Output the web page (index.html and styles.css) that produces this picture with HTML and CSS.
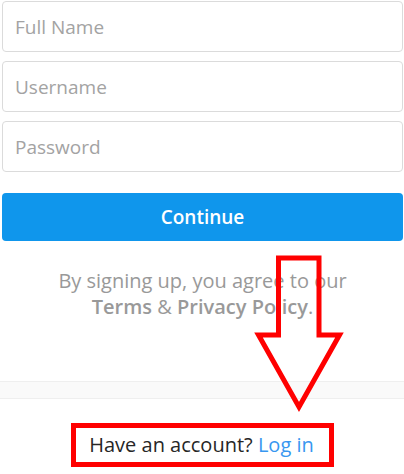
FILE: index.html
```html
<!DOCTYPE html>
<html>
<head>
<meta charset="utf-8">
<link rel="stylesheet" href="styles.css">
</head>
<body>
<div class="page">
  <form class="form">
    <input class="field" type="text" placeholder="Full Name">
    <input class="field" type="text" placeholder="Username">
    <input class="field field-last" type="password" placeholder="Password">
    <button class="btn" type="button">Continue</button>
  </form>
  <p class="terms">By signing up, you agree to our<br><b>Terms</b> &amp; <b>Privacy Policy</b>.</p>
  <div class="band"></div>
  <p class="login"><span class="highlight">Have an account? <a class="link">Log in</a></span></p>
  <svg class="arrow" viewBox="0 0 404 474" width="404" height="474">
    <polygon points="278.5,258 319,258 319,335 339.5,335 299,407 258.5,335 278.5,335" fill="none" stroke="#ff0000" stroke-width="5" stroke-linejoin="miter" stroke-miterlimit="10"/>
  </svg>
</div>
</body>
</html>
```
FILE: styles.css
```css
html, body {
  margin: 0;
  padding: 0;
  background: #ffffff;
}
body {
  font-family: "Open Sans", Lato, "Liberation Sans", sans-serif;
  width: 404px;
  height: 474px;
  overflow: hidden;
}
.page {
  position: relative;
  padding: 1px 1px 0 2px;
  height: 474px;
  box-sizing: border-box;
}
.form {
  margin: 0;
  display: flex;
  flex-direction: column;
  gap: 9px;
}
.field {
  display: block;
  width: 100%;
  height: 51px;
  box-sizing: border-box;
  border: 1px solid #dbdbdb;
  border-radius: 4px;
  padding: 0 12px;
  font-family: inherit;
  font-size: 19px;
  color: #262626;
  background: #ffffff;
  outline: none;
}
.field::placeholder {
  color: #a3a3a3;
}
.field-last {
  margin-bottom: 12px;
}
.btn {
  display: block;
  width: 100%;
  height: 48px;
  border: none;
  border-radius: 4px;
  background: #0f96ec;
  color: #ffffff;
  font-family: inherit;
  font-weight: 600;
  font-size: 19px;
  cursor: pointer;
}
.terms {
  margin: 27px 0 0;
  text-align: center;
  font-size: 20px;
  line-height: 26px;
  color: #999999;
}
.terms b {
  font-weight: 600;
  color: #999999;
}
.band {
  margin-top: 61px;
  height: 16px;
  background: #fafafa;
  border-top: 1px solid #efefef;
  border-bottom: 1px solid #efefef;
  margin-left: -2px;
  margin-right: -1px;
}
.login {
  margin: 24px 0 0;
  text-align: center;
  font-size: 20px;
  color: #262626;
}
.highlight {
  display: inline-block;
  height: 44px;
  box-sizing: border-box;
  border: 5px solid #ff0000;
  padding: 0 15px 0 13px;
  line-height: 34px;
}
.link {
  color: #3897f0;
  text-decoration: none;
}
.arrow {
  position: absolute;
  left: 0;
  top: 0;
  pointer-events: none;
}
```
